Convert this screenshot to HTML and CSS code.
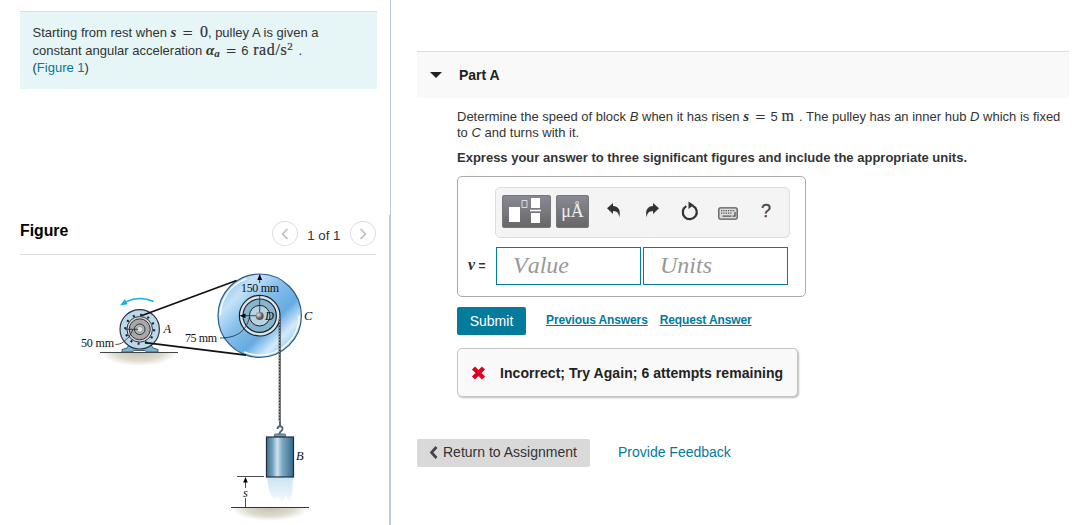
FILE: index.html
```html
<!DOCTYPE html>
<html lang="en">
<head>
  <meta charset="UTF-8">
  <meta name="viewport" content="width=device-width, initial-scale=1.0">
  <title>Part A - Pulley Problem</title>
  <link rel="stylesheet" href="styles.css">
</head>
<body>
<div class="page">

  <!-- Left: problem intro and figure -->
  <aside class="left">
    <div class="intro-pane">
      <div class="intro">
        <div class="line l1">Starting from rest when <i class="math">s</i> <span class="eq">=</span> <span class="num">0</span>, pulley A is given a</div>
        <div class="line l2">constant angular acceleration <i class="math">α<sub>a</sub></i> <span class="eq">=</span> 6 <span class="unit rad">rad/s<sup>2</sup></span> .</div>
        <div class="line l3">(<a href="#">Figure 1</a>)</div>
      </div>
    </div>

    <div class="figure-pane">
      <div class="figure-head">
        <h2>Figure</h2>
        <div class="pager">
          <button class="round"><svg width="8" height="12" viewBox="0 0 8 12"><path d="M6.5 1 1.5 6l5 5"/></svg></button>
          <span>1 of 1</span>
          <button class="round"><svg width="8" height="12" viewBox="0 0 8 12"><path d="M1.5 1l5 5-5 5"/></svg></button>
        </div>
      </div>

      <svg class="figure" width="357" height="270" viewBox="20 255 357 270">
        <defs>
          <linearGradient id="disc" x1="0" y1="0" x2="1" y2="1">
            <stop offset="0" stop-color="#6fb3e6"/>
            <stop offset=".25" stop-color="#c4e2f7"/>
            <stop offset=".42" stop-color="#86c0ec"/>
            <stop offset=".62" stop-color="#66abe2"/>
            <stop offset=".76" stop-color="#d3eafa"/>
            <stop offset="1" stop-color="#5fa5dd"/>
          </linearGradient>
          <linearGradient id="block">
            <stop offset="0" stop-color="#3f7493"/>
            <stop offset=".22" stop-color="#6f9fba"/>
            <stop offset=".4" stop-color="#cfe4ef"/>
            <stop offset=".58" stop-color="#7fabc3"/>
            <stop offset="1" stop-color="#33688a"/>
          </linearGradient>
          <linearGradient id="trail" x1="0" y1="0" x2="0" y2="1">
            <stop offset="0" stop-color="#b9dcee"/>
            <stop offset="1" stop-color="#f4fafd"/>
          </linearGradient>
          <radialGradient id="ground" cx=".5" cy="0" r=".5" gradientTransform="scale(1 2)">
            <stop offset="0" stop-color="#c6c3b2"/>
            <stop offset=".6" stop-color="#dcdacd"/>
            <stop offset="1" stop-color="#fff"/>
          </radialGradient>
          <radialGradient id="pin" cx=".35" cy=".35">
            <stop offset="0" stop-color="#e8e0de"/>
            <stop offset="1" stop-color="#5d5658"/>
          </radialGradient>
        </defs>

        <!-- motor A -->
        <rect x="100" y="352" width="78" height="14" fill="url(#ground)"/>
        <path d="M100 352.5h78" stroke="#444" stroke-width="1.2"/>
        <path d="M122 352v-2.5l5-1.500 3-5h20l3 5 5 1.500v2.500h-11l-2-1.500h-11l-2 1.500z" fill="#7fb2d0" stroke="#31526a" stroke-width=".9"/>
        <circle cx="139.700" cy="329.300" r="19.700" fill="#b9d9ee" stroke="#333" stroke-width="1.200"/>
        <circle cx="139.700" cy="329.300" r="14.400" fill="none" stroke="#222" stroke-width="2.200" stroke-dasharray="2 5.540"/>
        <circle cx="139.700" cy="329.300" r="12.800" fill="#d6d8da" stroke="#333"/>
        <circle cx="139.700" cy="329.300" r="10.500" fill="#a6a9ac" stroke="#333"/>
        <circle cx="139.700" cy="329.300" r="5.300" fill="#b3b5b6" stroke="#333"/>
        <circle cx="139.700" cy="329.300" r="3" fill="#dedfdf" stroke="#777" stroke-width=".6"/>
        <path d="M125 329.300h13M115.500 344.500c7 0 9-4 13.500-7.500l4-7.500" class="thin"/>
        <path d="M153.500 301.500c-9-4-19-3.700-27 .2" fill="none" stroke="#17aee8" stroke-width="1.500"/>
        <path d="M120 305.500l5-6.500 2.700 5.200z" fill="#17aee8"/>

        <!-- pulley C with hub D -->
        <circle cx="259.700" cy="315.700" r="41.700" fill="url(#disc)" stroke="#285b86" stroke-width="1.200"/>
        <circle cx="259.700" cy="315.700" r="39.400" fill="none" stroke="#fff" stroke-width="1.300" stroke-dasharray="78 46 48 76"/>
        <circle cx="259.700" cy="315.700" r="20.300" fill="#d3e6f2" stroke="#222" stroke-width="1.200"/>
        <circle cx="259.700" cy="315.700" r="16.700" fill="#86b5d0" stroke="#222" stroke-width="1.200"/>
        <circle cx="259.700" cy="315.700" r="10.300" fill="#b5d3e4" stroke="#222"/>
        <path d="M259.700 315V295M259.700 283v-8M259 315.700h-18M220 338c16 0 26-6 29.500-21" class="thin"/>
        <path d="M259.700 274l-2.400 6h4.800zM239.500 315.700l6-2.300v4.600z"/>
        <circle cx="259.700" cy="316" r="4" fill="url(#pin)"/>

        <!-- belt -->
        <path d="M142 315.500 236.500 280.500M145 342.700 246 355.200" stroke="#111" stroke-width="1.800"/>

        <!-- rope, hook, block B -->
        <path d="M279.700 318V421" stroke="#333" stroke-width="2"/>
        <path d="M279.700 318V421" stroke="#aaa" stroke-width="1" stroke-dasharray="1.500 1.500"/>
        <path d="M280 421v5M277.500 429c0-4 5.500-3.500 5 0-.3 2.500-3 1.500-3 5" fill="none" stroke="#4a6478" stroke-width="1.900"/>
        <rect x="274.500" y="434" width="11" height="3" rx="1" fill="#7d9db3" stroke="#2c4456" stroke-width=".7"/>
        <path d="M267 477.500h26l-1 17-3 8-3-7-4 7-4 -5-5 2-4-9z" fill="url(#trail)" opacity=".75"/>
        <rect x="266.500" y="437" width="27" height="40" fill="url(#block)" stroke="#222c34" stroke-width="1.200"/>

        <!-- ground and height s -->
        <rect x="231" y="508" width="78" height="13" fill="url(#ground)"/>
        <path d="M231 507.500h78" stroke="#333" stroke-width="1.200"/>
        <path d="M237 476.500h27M245.500 507v-9M245.500 488v-7" class="thin"/>
        <path d="M245.500 477l-2.300 5.500h4.600z"/>

        <g class="labels">
          <text x="81" y="346.500" textLength="33">50 mm</text>
          <text x="185" y="342" textLength="32">75 mm</text>
          <text x="241" y="292" textLength="38">150 mm</text>
          <g class="ital">
            <text x="163.500" y="332.500">A</text>
            <text x="265" y="320">D</text>
            <text x="304" y="320">C</text>
            <text x="296" y="460">B</text>
            <text x="243" y="496.500">s</text>
          </g>
        </g>
      </svg>
    </div>
  </aside>

  <!-- Right: the question -->
  <main class="right">
    <header class="part-head">
      <span class="caret"></span>
      <h3>Part A</h3>
    </header>

    <div class="part-body">
      <p class="question">
        Determine the speed of block <i>B</i> when it has risen <i class="math">s</i> <span class="eq">=</span> 5 <span class="unit">m</span> . The pulley has an inner hub <i>D</i> which is fixed<br>
        to <i>C</i> and turns with it.
      </p>
      <p class="express">Express your answer to three significant figures and include the appropriate units.</p>

      <div class="answer-box">
        <div class="toolbar">
          <button class="tool templates">
            <svg width="49" height="33" viewBox="0 0 49 33">
              <path d="M7 12h11v15H7zM29 3h9v10h-9zM29 18h9v10h-9zM28 14.800h11v1.500H28z" fill="#fff"/>
              <path d="M20 5.500h5v7h-5z" fill="none" stroke="#ddd"/>
            </svg>
          </button>
          <button class="tool symbols">μÅ</button>
          <div class="icons">
            <svg class="arrow" width="16" height="18" viewBox="0 0 16 18"><path d="M1 7.300 7 2v3c5 .2 8.300 4 6.200 11.500C13 12.500 11.500 10 7 9.900V13z"/></svg>
            <svg class="arrow" width="16" height="18" viewBox="0 0 16 18"><path d="M15 7.300 9 2v3C4 5.200.7 9 2.800 16.500 3 12.500 4.500 10 9 9.900V13z"/></svg>
            <svg class="reset" width="18" height="20" viewBox="0 0 18 20"><path d="M11.500 4.700A7 7 0 1 1 5.300 5.100" fill="none" stroke="#333" stroke-width="2.200"/><path d="M7.500.5 12.800 4 7.500 8z"/></svg>
            <svg class="kbd" width="20" height="13" viewBox="0 0 20 13"><rect x=".8" y=".8" width="18.400" height="11.400" rx="1.500" fill="#ddd" stroke="#555" stroke-width="1.300"/><path d="M3 3.700h14M3 6.200h11.500" stroke="#555" stroke-width="1.300" stroke-dasharray="1.300 1"/><path d="M4.500 9.200h9M14.500 9.200h2.500V5" fill="none" stroke="#555" stroke-width="1.300"/></svg>
            <span class="help">?</span>
          </div>
        </div>
        <div class="entry">
          <label><i class="math">v</i> =</label>
          <input type="text" class="field" placeholder="Value">
          <input type="text" class="field" placeholder="Units">
        </div>
      </div>

      <div class="actions">
        <button class="submit">Submit</button>
        <a href="#" class="prev">Previous Answers</a>
        <a href="#" class="req">Request Answer</a>
      </div>

      <div class="feedback">
        <svg width="15" height="14" viewBox="0 0 15 14"><path d="M2.500 2l10 10M12.500 2l-10 10" stroke="#e00023" stroke-width="4.400"/></svg>
        <span>Incorrect; Try Again; 6 attempts remaining</span>
      </div>
    </div>

    <footer class="bottom">
      <button class="return"><svg width="9" height="13" viewBox="0 0 9 13"><path d="M7.500 1 2.500 6.500l5 5.500" fill="none" stroke="#444" stroke-width="2.700"/></svg>Return to Assignment</button>
      <a href="#">Provide Feedback</a>
    </footer>
  </main>

</div>
</body>
</html>
```

FILE: styles.css
```css
* {
  box-sizing: border-box;
}
body {
  margin: 0;
  font-family: "Liberation Sans", Arial, sans-serif;
  font-size: 13px;
  color: #333;
  background: #fff;
  overflow: hidden;
}
h2, h3, p {
  margin: 0;
}
button {
  border: 0;
  padding: 0;
  font-family: inherit;
}
a {
  color: #047a9c;
  text-decoration: none;
}
svg {
  display: block;
}
.page {
  display: flex;
  height: 525px;
}

/* left column */
.left {
  width: 391px;
  flex: none;
}
.intro-pane {
  height: 215px;
  padding: 11px 13px 0 20px;
  border-right: 1px solid #b9cbdd;
}
.intro {
  height: 78px;
  padding: 12px 0 0 12.500px;
  background: #e6f5f6;
  border-top: 1px solid #d9dfe0;
}
.line {
  height: 18px;
  line-height: 18px;
  white-space: nowrap;
}
.l3 {
  height: 17px;
  line-height: 16px;
}
.math {
  font-family: "Liberation Serif", serif;
  font-weight: bold;
  font-size: 15px;
  line-height: 1px;
}
.unit, .num {
  font-family: "Liberation Serif", serif;
  font-size: 16px;
  line-height: 1px;
  -webkit-text-stroke: .2px #333;
}
.unit {
  margin-right: 1.500px;
}
.num {
  margin-left: 2px;
}
.rad {
  margin-left: 1px;
  letter-spacing: .6px;
}
.eq {
  margin: 0 1px 0 2px;
  font-family: "DejaVu Serif", serif;
  font-size: 13.500px;
  line-height: 1px;
}
sub, sup {
  font-size: 11px;
  line-height: 1px;
}
sub {
  vertical-align: -2px;
}
sup {
  vertical-align: 5px;
}
.figure-pane {
  height: 310px;
  padding-left: 20px;
  border-right: 2px solid #b9cbdd;
}
.figure-head {
  display: flex;
  justify-content: space-between;
  width: 356px;
  height: 40px;
  border-bottom: 1px solid #ddd;
}
.figure-head h2 {
  margin-top: 7px;
  font-size: 15.800px;
  line-height: 18px;
  color: #000;
}
.pager {
  display: flex;
  gap: 9.500px;
  padding-top: 6px;
  font-size: 13.300px;
}
.pager span {
  padding-top: 7px;
}
.round {
  display: flex;
  align-items: center;
  justify-content: center;
  width: 26px;
  height: 25px;
  background: #fff;
  border: 1px solid #ddd;
  border-radius: 50%;
}
.round path {
  fill: none;
  stroke: #bbb;
  stroke-width: 1.600;
}
.thin {
  fill: none;
  stroke: #222;
  stroke-width: .8;
}
.labels {
  font-family: "Liberation Serif", serif;
  font-size: 12px;
  fill: #111;
}
.ital {
  font-size: 12.500px;
  font-style: italic;
}

/* right column */
.right {
  width: 652px;
  margin: 51px 0 0 26px;
}
.part-head {
  display: flex;
  align-items: center;
  height: 47px;
  padding-left: 13px;
  background: #f9f9f9;
  border-top: 1px solid #ddd;
}
.caret {
  border: 6px solid transparent;
  border-top: 6px solid #222;
  border-bottom: 0;
}
.part-head h3 {
  margin-left: 17px;
  font-size: 14px;
  color: #222;
}
.part-body {
  padding: 11px 0 0 40px;
}
.question {
  line-height: 16px;
  white-space: nowrap;
}
.express {
  margin-top: 9px;
  font-weight: bold;
  line-height: 16px;
  white-space: nowrap;
}
.answer-box {
  width: 349px;
  height: 121px;
  margin-top: 10px;
  padding: 10px 0 0 10px;
  border: 1px solid #aaa;
  border-radius: 5px;
}
.toolbar {
  display: flex;
  gap: 5px;
  width: 295px;
  height: 51px;
  margin-left: 27px;
  padding: 7px 6px;
  background: #f4f4f4;
  border: 1px solid #ddd;
  border-radius: 5px;
}
.tool {
  height: 33px;
  background: linear-gradient(#8a8a96, #666);
  border-radius: 3px;
  box-shadow: inset 0 0 0 1px #777;
}
.templates {
  width: 49px;
}
.symbols {
  width: 33px;
  font-family: "Liberation Serif", serif;
  font-size: 18px;
  color: #eee;
}
.icons {
  display: flex;
  align-items: center;
  height: 33px;
  padding-left: 12px;
  gap: 22px;
}
.icons svg {
  fill: #333;
}
.arrow {
  margin-bottom: 3px;
}
.reset {
  margin: 0 0 2px -1px;
}
.kbd {
  margin: 3px 0 0 -3px;
}
.help {
  margin-left: 1px;
  font-size: 18px;
  color: #444;
  -webkit-text-stroke: .3px #444;
}
.entry {
  display: flex;
  align-items: center;
  margin-top: 9px;
  gap: 2px;
}
.entry label {
  width: 26px;
  font-weight: bold;
  font-size: 12px;
}
.entry label .math {
  font-size: 16px;
}
.field {
  width: 145px;
  height: 38px;
  padding: 0 0 2px 16px;
  border: 1px solid #047a9c;
  font: italic 24px "Liberation Serif", serif;
  font-kerning: none;
}
.field::placeholder {
  color: #999;
}
.actions {
  display: flex;
  margin-top: 10px;
  font-size: 12px;
  font-weight: bold;
}
.actions a {
  margin-top: 6px;
  letter-spacing: -.12px;
  text-decoration: underline;
}
.submit {
  width: 69px;
  height: 28px;
  margin-right: 20px;
  background: #047a9c;
  border-radius: 2px;
  color: #fff;
  font-size: 14px;
}
.prev {
  margin-right: 12px;
}
.feedback {
  display: flex;
  align-items: center;
  gap: 14px;
  width: 341px;
  height: 49px;
  margin-top: 13px;
  padding-left: 13px;
  background: #f9f9f9;
  border: 1px solid #c4c4c4;
  border-radius: 5px;
  box-shadow: 1px 1px 2px #bbb;
  color: #222;
  font-size: 14px;
  font-weight: bold;
  letter-spacing: .05px;
  white-space: nowrap;
}
.bottom {
  display: flex;
  align-items: center;
  gap: 28px;
  margin-top: 42px;
  font-size: 14px;
}
.bottom a {
  padding-bottom: 2px;
}
.return {
  display: flex;
  align-items: center;
  gap: 5px;
  width: 173px;
  height: 28px;
  padding: 0 0 2px 12px;
  background: #d9d9d9;
  border-radius: 2px;
  color: #333;
  font-size: 14px;
  white-space: nowrap;
}
```
